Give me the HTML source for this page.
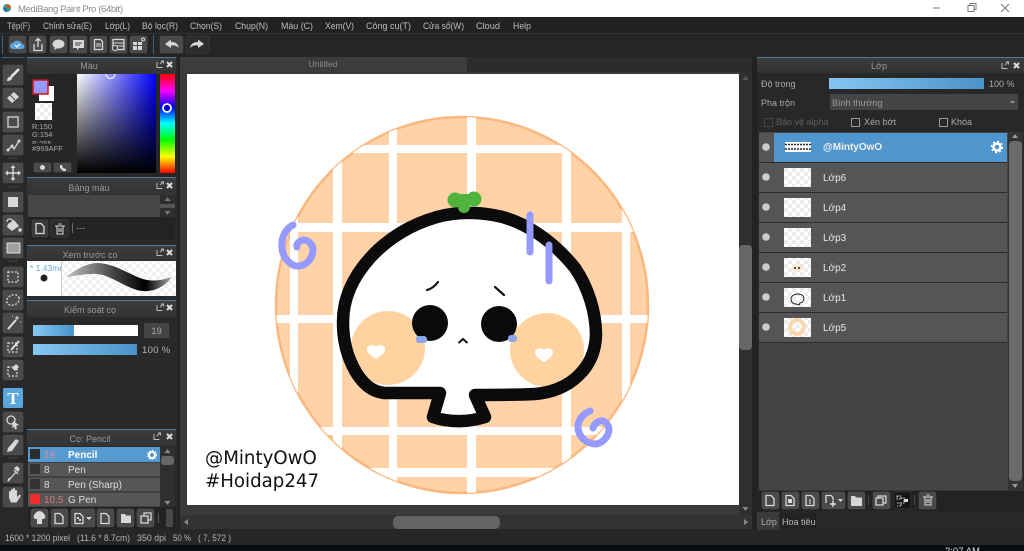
<!DOCTYPE html>
<html><head><meta charset="utf-8"><title>MediBang Paint Pro</title>
<style>
html,body{margin:0;padding:0;background:#1f1f1f;width:1024px;height:551px;overflow:hidden}
svg{display:block}
text{font-family:"Liberation Sans",sans-serif;font-size:9.5px;fill:#c4c4c4}
.m{fill:#bdbdbd;font-size:9.5px}
.d{fill:#9a9a9a}
.w{fill:#e6e6e6}
.b{fill:#3a3a3a;stroke:#4a4a4a;stroke-width:.5}
.t{fill:#4a4a4a;stroke:#555;stroke-width:.5}
.i{fill:none;stroke:#d8d8d8;stroke-width:1.3}
.f{fill:#d8d8d8}
.h{fill:url(#hd)}
.c{text-anchor:middle}
</style></head><body>
<svg width="1024" height="551" viewBox="0 0 1024 551" xmlns="http://www.w3.org/2000/svg">
<defs>
<pattern id="ck" width="8" height="8" patternUnits="userSpaceOnUse"><rect width="8" height="8" fill="#fff"/><rect width="4" height="4" fill="#ececec"/><rect x="4" y="4" width="4" height="4" fill="#ececec"/></pattern>
<pattern id="cl" width="8" height="8" patternUnits="userSpaceOnUse"><rect width="8" height="8" fill="#fff"/><rect width="4" height="4" fill="#f1f1f1"/><rect x="4" y="4" width="4" height="4" fill="#f1f1f1"/></pattern>
<linearGradient id="hd" x1="0" y1="0" x2="0" y2="1"><stop offset="0" stop-color="#3c3c3c"/><stop offset="1" stop-color="#333"/></linearGradient>
<linearGradient id="bl" x1="0" y1="0" x2="1" y2="0"><stop offset="0" stop-color="#86c6f4"/><stop offset="1" stop-color="#4a93c8"/></linearGradient>
<linearGradient id="sw" x1="0" y1="0" x2="1" y2="0"><stop offset="0" stop-color="#fff"/><stop offset="1" stop-color="#0000ff"/></linearGradient>
<linearGradient id="sk" x1="0" y1="0" x2="0" y2="1"><stop offset="0" stop-color="#000" stop-opacity="0"/><stop offset="1" stop-color="#000"/></linearGradient>
<linearGradient id="hue" x1="0" y1="0" x2="0" y2="1"><stop offset="0" stop-color="#f00"/><stop offset=".167" stop-color="#f0f"/><stop offset=".333" stop-color="#00f"/><stop offset=".5" stop-color="#0ff"/><stop offset=".667" stop-color="#0f0"/><stop offset=".833" stop-color="#ff0"/><stop offset="1" stop-color="#f00"/></linearGradient>
<linearGradient id="br" x1="0" y1="0" x2="1" y2="0"><stop offset="0" stop-color="#c4c4c4"/><stop offset=".45" stop-color="#444"/><stop offset=".75" stop-color="#000"/><stop offset="1" stop-color="#aaa"/></linearGradient>
<clipPath id="cc"><ellipse cx="462" cy="305" rx="186" ry="188"/></clipPath>
<clipPath id="rgb"><rect x="30" y="120" width="46" height="23.5"/></clipPath>
</defs>

<!-- title bar -->
<rect width="1024" height="17" fill="#fff"/>
<circle cx="7" cy="8" r="4" fill="#3a9a7a"/><path d="M7 4a4 4 0 0 1 4 4H7z" fill="#d9503f"/><path d="M3 8a4 4 0 0 0 4 4V8z" fill="#2c6fb5"/>
<text x="18" y="12" textLength="105" style="font-size:9.5px;fill:#8b8b8b">MediBang Paint Pro (64bit)</text>
<path d="M933 8h7" stroke="#777" fill="none"/><path d="M968 5.500h6v6h-6zM970 5.500v-2h6v6h-2" stroke="#777" fill="none"/><path d="M1001 4l8 8M1009 4l-8 8" stroke="#777" fill="none"/>

<!-- menu -->
<rect y="17" width="1024" height="16" fill="#222"/>
<rect y="33" width="1024" height="1" fill="#333"/>
<rect y="34" width="1024" height="23" fill="#252525"/>
<text class="m" x="7" y="29" textLength="23" lengthAdjust="spacingAndGlyphs">Tệp(F)</text><text class="m" x="43" y="29" textLength="49" lengthAdjust="spacingAndGlyphs">Chỉnh sửa(E)</text><text class="m" x="105" y="29" textLength="25" lengthAdjust="spacingAndGlyphs">Lớp(L)</text><text class="m" x="142" y="29" textLength="36" lengthAdjust="spacingAndGlyphs">Bộ lọc(R)</text><text class="m" x="190" y="29" textLength="32" lengthAdjust="spacingAndGlyphs">Chọn(S)</text><text class="m" x="235" y="29" textLength="33" lengthAdjust="spacingAndGlyphs">Chụp(N)</text><text class="m" x="281" y="29" textLength="32" lengthAdjust="spacingAndGlyphs">Màu (C)</text><text class="m" x="325" y="29" textLength="29" lengthAdjust="spacingAndGlyphs">Xem(V)</text><text class="m" x="366" y="29" textLength="45" lengthAdjust="spacingAndGlyphs">Công cụ(T)</text><text class="m" x="423" y="29" textLength="41" lengthAdjust="spacingAndGlyphs">Cửa sổ(W)</text><text class="m" x="476" y="29" textLength="24" lengthAdjust="spacingAndGlyphs">Cloud</text><text class="m" x="513" y="29" textLength="18" lengthAdjust="spacingAndGlyphs">Help</text>

<!-- toolbar -->
<rect x="2" y="35" width="1" height="19" fill="#3d5f78"/><rect x="153" y="35" width="1" height="19" fill="#3d5f78"/>
<rect class="t" x="9" y="36" width="17" height="17" rx="2"/><rect class="t" x="29" y="36" width="17" height="17" rx="2"/><rect class="t" x="50" y="36" width="17" height="17" rx="2"/><rect class="t" x="70" y="36" width="17" height="17" rx="2"/><rect class="t" x="90" y="36" width="17" height="17" rx="2"/><rect class="t" x="110" y="36" width="17" height="17" rx="2"/><rect class="t" x="130" y="36" width="17" height="17" rx="2"/><rect class="t" x="160" y="36" width="23" height="17" rx="2"/><rect fill="#2c2c2c" stroke="#444" stroke-width=".5" x="186" y="36" width="23" height="17" rx="2"/>
<path d="M13 49a3 3 0 0 1 0-6 5 5 0 0 1 9 1 2.500 2.500 0 0 1 0 5z" fill="#5ea6dd"/><path d="M15 45l2 2 3-3" stroke="#fff" fill="none" stroke-width="1.2"/>
<path class="i" d="M34 44v6.500h8V44M38 47v-8M35.500 41l2.500-2.500 2.500 2.500"/>
<ellipse class="f" cx="58.500" cy="44" rx="6" ry="4.500"/><path class="f" d="M55 47l-1 3 4-2z"/>
<path class="f" d="M73 40h11v8h-5l-2 2.500V48h-4z"/><path d="M75 43h7M75 45h5" stroke="#444"/>
<path class="i" d="M94.500 39.500h6l2 2v8h-8z"/><path d="M96 44h5M96 46h5" stroke="#d8d8d8"/>
<path class="i" d="M113 39.500h11v10h-11z"/><path d="M113 43h11M113 46h11" stroke="#d8d8d8"/><circle cx="115" cy="48" r="2.500" fill="#444" stroke="#d8d8d8"/>
<path class="f" d="M133 42h4v3h-4zM138 42h4v3h-4zM133 46h4v4h-4zM138 46h4v4h-4z"/><circle cx="143" cy="39.500" r="1.500" fill="none" stroke="#d8d8d8"/>
<path class="f" d="M165 44l6-4.500v2.500c5 0 7 2 8 6-2-2-4-3-8-2.500V48z"/>
<path class="f" d="M204 44l-6-4.500v2.500c-5 0-7 2-8 6 2-2 4-3 8-2.500V48z"/>

<!-- left column -->
<rect x="0" y="57" width="27" height="473" fill="#282828"/>
<rect x="2" y="57" width="23" height="1" fill="#3d5f78"/>
<rect x="27" y="57" width="151" height="473" fill="#2a2929"/>
<rect x="178" y="57" width="2" height="473" fill="#222"/>

<!-- tool buttons -->
<rect class="t" x="3" y="65" width="20" height="20" rx="1.500"/><rect class="t" x="3" y="88" width="20" height="20" rx="1.500"/><rect class="t" x="3" y="112" width="20" height="20" rx="1.500"/><rect class="t" x="3" y="135" width="20" height="20" rx="1.500"/><rect class="t" x="3" y="163" width="20" height="20" rx="1.500"/><rect class="t" x="3" y="192" width="20" height="20" rx="1.500"/><rect class="t" x="3" y="215" width="20" height="20" rx="1.500"/><rect class="t" x="3" y="238" width="20" height="20" rx="1.500"/><rect class="t" x="3" y="267" width="20" height="20" rx="1.500"/><rect class="t" x="3" y="290" width="20" height="20" rx="1.500"/><rect class="t" x="3" y="313" width="20" height="20" rx="1.500"/><rect class="t" x="3" y="337" width="20" height="20" rx="1.500"/><rect class="t" x="3" y="360" width="20" height="20" rx="1.500"/><rect fill="#5aa5dc" x="3" y="388" width="20" height="20" rx="1.500"/><rect class="t" x="3" y="412" width="20" height="20" rx="1.500"/><rect class="t" x="3" y="435" width="20" height="20" rx="1.500"/><rect class="t" x="3" y="463" width="20" height="20" rx="1.500"/><rect class="t" x="3" y="487" width="20" height="20" rx="1.500"/>
<path d="M8 158h10M8 187h10M8 261h10M8 458h10" stroke="#444"/>
<path d="M19 69l-8 8" stroke="#e8e8e8" stroke-width="2.500"/><path class="f" d="M7 81c0-3 2-5 4-4 2 1 1 4-4 4z"/>
<path class="f" d="M7 98l7-6 5 5-7 6z"/><path d="M10 95l5 5" stroke="#444"/>
<rect class="i" x="8" y="117" width="10" height="10"/>
<path class="i" d="M8 150l4-4 2 3 5-8" stroke-width="1.600"/><circle class="f" cx="8" cy="150" r="1.500"/><circle class="f" cx="12" cy="146" r="1.500"/><circle class="f" cx="19" cy="141" r="1.500"/>
<path class="f" d="M13 165l2.500 3h-5zM13 181l2.500-3h-5zM5 173l3-2.500v5zM21 173l-3-2.500v5z"/><path d="M13 167v12M7 173h12" stroke="#d8d8d8" stroke-width="1.400"/>
<rect class="f" x="8" y="197" width="10" height="10"/>
<path class="f" d="M8 224l6-4 5 6-7 5-5-4z"/><path class="i" d="M7 222c0-4 5-4 6 0"/><circle class="f" cx="20" cy="230" r="1.700"/>
<rect x="7" y="243" width="13" height="10" style="fill:#a0a0a0" stroke="#ddd"/>
<rect x="8" y="272" width="10" height="10" class="i" stroke-dasharray="2 1.500"/>
<ellipse cx="13" cy="300" rx="6.500" ry="5" class="i" stroke-dasharray="2 1.500" transform="rotate(-25 13 300)"/>
<path d="M8 329l8-9" stroke="#e0e0e0" stroke-width="2"/><path d="M17 316v4M15 318h4M12 316h1M20 322h1" stroke="#e0e0e0"/>
<rect class="i" x="8" y="343" width="9" height="9" stroke-dasharray="2 1.500"/><path d="M11 350l8-9" stroke="#e0e0e0" stroke-width="2"/>
<rect class="i" x="8" y="367" width="9" height="9" stroke-dasharray="2 1.500"/><path class="f" d="M12 368l4-4 3 3-4 4z"/>
<text x="13" y="404" class="c" style="font-family:'Liberation Serif',serif;font-size:17px;font-weight:bold;fill:#fff">T</text>
<circle class="i" cx="11" cy="420" r="4"/><path class="f" d="M13 421l6 4-3 1 1 3-2 .5-1-3-2 2z"/>
<path class="f" d="M8 448l8-9 3 2-7 10-5 1z"/>
<path class="i" d="M9 480l7-8M14 470l4 4"/><path class="f" d="M14 468l3-2 3 3-2 3z"/><path d="M8 481l2-3" stroke="#d8d8d8" stroke-width="2"/>
<path class="f" d="M9 498v-6a1 1 0 0 1 2 0v-2a1 1 0 0 1 2 0v-1a1 1 0 0 1 2 0v2a1 1 0 0 1 2 0v6l2-2a1 1 0 0 1 1.500 1.500l-4 6H11z"/>

<!-- Colour panel -->
<rect x="27" y="57" width="149" height="1" fill="#4d7d9d"/>
<rect class="h" x="27" y="58" width="149" height="16"/>
<text class="c d" x="89" y="69" style="font-size:9px">Màu</text>
<path stroke-width="1" d="M157 62v5.500h5.500M160 64l3-3M161 61h2.500v2.500" style="stroke:#bbb;fill:none"/><path d="M167 62l5 5M172 62l-5 5" stroke="#ddd" stroke-width="2"/>
<rect x="27" y="74" width="150" height="103" fill="#272626"/>
<rect x="39" y="86" width="15" height="15" fill="#fff"/>
<rect x="33" y="80" width="15" height="14" fill="#969aff" stroke="#d0141c" stroke-width="1.500"/>
<rect x="35" y="103" width="17" height="17" fill="url(#ck)"/>
<g clip-path="url(#rgb)"><text x="32" y="129" style="font-size:7.500px;fill:#aaa">R:150</text><text x="32" y="137" style="font-size:7.500px;fill:#aaa">G:154</text><text x="32" y="146" style="font-size:7.500px;fill:#aaa">B:255</text></g>
<text x="32" y="151" style="font-size:7.500px;fill:#aaa">#969AFF</text>
<rect class="t" x="34" y="163" width="17" height="9" rx="1"/><rect class="t" x="54" y="163" width="17" height="9" rx="1"/>
<circle class="f" cx="42.500" cy="167.500" r="2.500"/><path class="f" d="M60 165l2 0 1 3 3 1 0 2-3 0-3-3z"/>
<rect x="77" y="74" width="79" height="99" fill="url(#sw)"/><rect x="77" y="74" width="79" height="99" fill="url(#sk)"/>
<path d="M106 74a4.500 4.500 0 0 0 9 0" fill="none" stroke="#dfe0ff" stroke-width="1.500"/>
<rect x="160" y="74" width="15" height="99" fill="url(#hue)"/>
<circle cx="167" cy="108" r="4" fill="#0000d8" stroke="#fff" stroke-width="1.800"/>

<!-- Palette panel -->
<rect x="27" y="177" width="149" height="1" fill="#4d7d9d"/>
<rect class="h" x="27" y="178" width="149" height="17"/>
<text class="c d" x="89" y="191" style="font-size:9px">Bảng màu</text>
<path style="stroke:#bbb;fill:none" d="M157 183v5.500h5.500M160 185l3-3M161 182h2.500v2.500"/><path d="M167 183l5 5M172 183l-5 5" stroke="#ddd" stroke-width="2"/>
<rect x="28" y="195" width="132" height="22" fill="#474645"/>
<rect x="160" y="195" width="15" height="22" fill="#2e2e2e"/>
<rect x="160" y="204" width="15" height="4" fill="#555"/>
<path d="M167.500 197l3 4h-6zM167.500 215l3-4h-6z" fill="#777"/>
<rect x="29" y="217" width="146" height="23" fill="#232323"/>
<rect class="b" x="32" y="220" width="16" height="17" rx="1.500"/><rect fill="#2b2b2b" stroke="#555" stroke-width=".5" x="51" y="220" width="17" height="17" rx="1.500"/>
<path class="i" d="M36 223.500h5l3 3v7h-8z" stroke-width="1"/>
<path d="M55 226h10M57 226v8h6v-8M58.500 224h3M59 228v4M61 228v4" stroke="#ddd" fill="none"/>
<rect x="72" y="223" width="1" height="10" fill="#666"/><text x="76" y="231" class="d" style="font-size:9px">---</text>

<!-- preview -->
<rect x="27" y="245" width="149" height="1" fill="#4d7d9d"/>
<rect class="h" x="27" y="246" width="149" height="15"/>
<text class="c d" x="90" y="258" style="font-size:9px">Xem trước cọ</text>
<path style="stroke:#bbb;fill:none" d="M157 250v5.500h5.500M160 252l3-3M161 249h2.500v2.500"/><path d="M167 250l5 5M172 250l-5 5" stroke="#ddd" stroke-width="2"/>
<rect x="27" y="261" width="34" height="35" fill="#fff"/><rect x="61" y="261" width="1" height="35" fill="#ccc"/>
<rect x="62" y="261" width="114" height="35" fill="url(#cl)"/>
<text x="30" y="271" style="font-size:8.500px;fill:#6aa8d8">* 1.43mr</text>
<circle cx="44" cy="278" r="3.500" fill="#222"/>
<path d="M66 277C75 270 87 263 97 263 112 263 125 272 140 278 150 282 160 281 172 277 165 286 155 292 143 291 130 290 118 280 103 275 90 272 78 276 66 277Z" fill="url(#br)"/>

<!-- brush control -->
<rect x="27" y="300" width="149" height="1" fill="#4d7d9d"/>
<rect class="h" x="27" y="301" width="149" height="16"/>
<text class="c d" x="90" y="313" style="font-size:9px">Kiểm soát cọ</text>
<path style="stroke:#bbb;fill:none" d="M157 305v5.500h5.500M160 307l3-3M161 304h2.500v2.500"/><path d="M167 305l5 5M172 305l-5 5" stroke="#ddd" stroke-width="2"/>
<rect x="33" y="325" width="105" height="11" fill="#fff"/><rect x="33" y="325" width="41" height="11" fill="url(#bl)"/>
<rect x="144" y="323" width="25" height="15" fill="#454545"/><text x="156.500" y="334" class="c" style="font-size:9.500px;fill:#aaa">19</text>
<rect x="33" y="344" width="104" height="11" fill="url(#bl)"/>
<text x="142" y="353" style="font-size:9.500px;fill:#b5b5b5;letter-spacing:.3px">100 %</text>

<!-- brush list -->
<rect x="27" y="429" width="149" height="1" fill="#4d7d9d"/>
<rect class="h" x="27" y="430" width="149" height="16"/>
<text class="c d" x="90" y="442" style="font-size:9px">Cọ: Pencil</text>
<path style="stroke:#bbb;fill:none" d="M154 434v5.500h5.500M157 436l3-3M158 433h2.500v2.500"/><path d="M167 434l5 5M172 434l-5 5" stroke="#ddd" stroke-width="2"/>
<rect x="28" y="447" width="132" height="15" fill="#559ad0"/>
<rect x="28" y="462.500" width="132" height="14" fill="#565656"/><rect x="28" y="477.500" width="132" height="14" fill="#565656"/><rect x="28" y="492.500" width="132" height="14" fill="#565656"/>
<rect x="30" y="449" width="10" height="10" fill="#2c2c2c"/><rect x="30" y="464" width="10" height="10" fill="#333"/><rect x="30" y="479" width="10" height="10" fill="#333"/><rect x="30" y="494" width="10" height="10" fill="#ee2c2c"/>
<text x="44" y="458" style="font-size:10px;fill:#e88a9a">19</text><text x="44" y="473" style="font-size:10px;fill:#ddd">8</text><text x="44" y="488" style="font-size:10px;fill:#ddd">8</text><text x="44" y="503" style="font-size:10px;fill:#d87a7a">10.5</text>
<text x="68" y="458" style="font-size:10px;font-weight:bold;fill:#fff">Pencil</text><text x="68" y="473" style="font-size:10px;fill:#ddd">Pen</text><text x="68" y="488" style="font-size:10px;fill:#ddd">Pen (Sharp)</text><text x="68" y="503" style="font-size:10px;fill:#ddd">G Pen</text>
<circle cx="152" cy="455" r="3" fill="none" stroke="#fff" stroke-width="2"/><circle cx="152" cy="455" r="4.500" fill="none" stroke="#fff" stroke-width="1" stroke-dasharray="1.500 1.500"/>
<rect x="160" y="447" width="15" height="60" fill="#2f2f2f"/><rect x="161" y="456" width="13" height="9" rx="3" fill="#666"/>
<path d="M167.500 449l3 4h-6zM167.500 505l3-4h-6z" fill="#888"/>
<rect x="28" y="507" width="148" height="22" fill="#232323"/>
<rect class="t" x="31" y="509" width="17" height="18" rx="2"/><rect class="t" x="51" y="509" width="17" height="18" rx="2"/><rect class="t" x="71" y="509" width="24" height="18" rx="2"/><rect class="t" x="97" y="509" width="17" height="18" rx="2"/><rect class="t" x="117" y="509" width="17" height="18" rx="2"/><rect class="t" x="137" y="509" width="17" height="18" rx="2"/><rect x="158" y="513" width="1" height="10" fill="#555"/><rect x="166" y="509" width="7" height="18" rx="1.500" fill="#484848"/>
<path class="f" d="M35 519a3 3 0 0 1 0-5 5 5 0 0 1 9 0 3 3 0 0 1 0 5h-2v5h-5v-5z"/>
<path class="i" d="M55 513.500h5l3 3v7h-8z" stroke-width="1"/>
<path class="i" d="M75 513.500h5l3 3v7h-8z" stroke-width="1"/><path class="f" d="M77 517h2v2h-2zM79 519h2v2h-2z"/><path class="f" d="M86 517h6l-3 3z"/>
<path class="i" d="M101 513.500h5l3 3v7h-8z" stroke-width="1"/>
<path class="f" d="M121 514h4l1 1.500h5V523h-10z"/>
<path class="i" d="M141 516h7v7h-7zM144 516v-3h7v7h-3" stroke-width="1"/>

<!-- canvas zone -->
<rect x="180" y="57" width="577" height="473" fill="#272727"/>
<rect x="180" y="57" width="287" height="15" fill="#3c3c3c"/>
<rect x="467" y="57" width="285" height="15" fill="#2c2c2c"/>
<text x="323" y="67" class="c" style="font-size:8.500px;fill:#8e8e8e">Untitled</text>
<rect x="180" y="72" width="559" height="443" fill="#3a3a3a"/>
<rect x="187" y="74" width="552" height="431" fill="#fff"/>
<rect x="739" y="72" width="13" height="443" fill="#2f2f2f"/>
<rect x="739" y="245" width="13" height="105" rx="4" fill="#666"/>
<path d="M745.500 511l3-4h-6z" fill="#888"/><path d="M745.500 76l3 4h-6z" fill="#555"/>
<rect x="180" y="515" width="572" height="14" fill="#333"/>
<rect x="393" y="516" width="107" height="13" rx="5" fill="#646464"/>
<path d="M184 522l4-3v6zM748 522l-4-3v6z" fill="#888"/>
<rect x="752" y="57" width="5" height="473" fill="#222"/>

<!-- drawing -->
<ellipse cx="462" cy="305" rx="186" ry="188" fill="#ffd2a8" stroke="#fbb87e" stroke-width="2.500"/>
<g clip-path="url(#cc)" fill="#fff">
<rect x="290" y="116" width="8" height="380"/><rect x="333" y="116" width="9" height="380"/><rect x="389" y="116" width="8" height="380"/><rect x="467" y="116" width="9" height="380"/><rect x="562" y="116" width="9" height="380"/><rect x="622" y="116" width="8" height="380"/>
<rect x="270" y="145" width="390" height="8"/><rect x="270" y="223" width="390" height="9"/><rect x="270" y="315" width="390" height="8"/><rect x="270" y="427" width="390" height="8"/><rect x="270" y="468" width="390" height="9"/>
</g>
<path d="M343 322C343 300 352 278 370 258 388 238 412 224 437 217 455 212 475 212 493 215 525 220 555 243 575 268 588 287 596 312 596 335 595 368 570 391 535 394 515 395 495 395 475 395L485 417C470 422 450 423 433 417L440 393 385 393C370 392 358 380 350 360 345 348 343 335 343 322Z" fill="#fff"/>
<circle cx="388" cy="348" r="37" fill="#ffd3a0"/><circle cx="547" cy="350" r="37" fill="#ffd3a0"/>
<path d="M343 322C343 300 352 278 370 258 388 238 412 224 437 217 455 212 475 212 493 215 525 220 555 243 575 268 588 287 596 312 596 335 595 368 570 391 535 394 515 395 495 395 475 395L485 417C470 422 450 423 433 417L440 393 385 393C370 392 358 380 350 360 345 348 343 335 343 322Z" fill="none" stroke="#0b0b0b" stroke-width="12.500" stroke-linejoin="round" stroke-linecap="round"/>
<g fill="#4fb33e"><circle cx="455" cy="200" r="7.500"/><circle cx="474" cy="199" r="7.500"/><circle cx="464" cy="207" r="6"/><rect x="455" y="194" width="18" height="9"/></g>
<path d="M530 215v37M549 245v36" stroke="#969aff" stroke-width="7" stroke-linecap="round"/>
<circle cx="430" cy="323" r="18" fill="#0a0a0a"/><circle cx="499" cy="324" r="18" fill="#0a0a0a"/>
<rect x="416" y="336" width="11" height="7" rx="3" fill="#8ea6ec"/><rect x="508" y="335" width="9" height="7" rx="3" fill="#8ea6ec"/>
<path d="M427 290c4-1 8-4 11-8" fill="none" stroke="#111" stroke-width="2.200" stroke-linecap="round"/>
<path d="M495 287l9 8" fill="none" stroke="#111" stroke-width="2.200" stroke-linecap="round"/>
<path d="M458.500 343l4.500-4 4.500 4" fill="none" stroke="#111" stroke-width="2"/>
<path d="M376 359c-5-3-9-6-9-10 0-4 6-5 9-2 3-3 9-2 9 2 0 4-4 7-9 10z" fill="#fff"/>
<path d="M544 362c-5-3-9-6-9-10 0-4 6-5 9-2 3-3 9-2 9 2 0 4-4 7-9 10z" fill="#fff"/>
<path d="M293 225C285 229 281 238 282 248 283 260 293 267 299 266 308 265 313 257 313 249 312 243 307 240 303 240 299 241 296 244 297 247" fill="none" stroke="#969aff" stroke-width="7" stroke-linecap="round"/>
<path d="M590 411C582 414 578 421 578 427 578 437 587 444 596 444 603 443 609 436 609 429 608 423 604 420 600 421 596 422 594 425 593 428" fill="none" stroke="#969aff" stroke-width="7" stroke-linecap="round"/>
<text x="205" y="464" style="font-family:'DejaVu Sans',sans-serif;font-size:18.2px;fill:#111">@MintyOwO</text>
<text x="205" y="487" style="font-family:'DejaVu Sans',sans-serif;font-size:18.2px;fill:#111">#Hoidap247</text>

<!-- right panel -->
<rect x="757" y="57" width="267" height="1" fill="#4d7d9d"/>
<rect class="h" x="757" y="58" width="267" height="15"/>
<text class="c d" x="879" y="69" style="font-size:9px">Lớp</text>
<path style="stroke:#bbb;fill:none" d="M1002 63v5.500h5.500M1005 65l3-3M1006 62h2.500v2.500"/><path d="M1014 63l5 5M1019 63l-5 5" stroke="#ddd" stroke-width="2"/>
<rect x="757" y="73" width="267" height="457" fill="#282828"/>
<text x="761" y="87" style="font-size:9px;fill:#aaa">Độ trong</text>
<rect x="829" y="78" width="155" height="11" fill="url(#bl)"/>
<text x="989" y="87" style="font-size:9px;fill:#aaa">100 %</text>
<text x="761" y="106" style="font-size:9px;fill:#aaa">Pha trộn</text>
<rect x="830" y="94" width="188" height="16" rx="1" fill="#454545"/>
<text x="832" y="106" style="font-size:9px;fill:#999">Bình thường</text><path d="M1010 101h5l-2.500 2.500z" fill="#999"/>
<rect x="764.500" y="118.500" width="8" height="8" fill="none" stroke="#444"/><text x="776" y="125" style="font-size:9px;fill:#5e5e5e">Bảo vệ alpha</text>
<rect x="851.500" y="118.500" width="8" height="8" fill="none" stroke="#999"/><text x="864" y="125" style="font-size:9px;fill:#aaa">Xén bớt</text>
<rect x="939.500" y="118.500" width="8" height="8" fill="none" stroke="#999"/><text x="951" y="125" style="font-size:9px;fill:#aaa">Khóa</text>
<rect x="759" y="132" width="249" height="358" fill="#474544"/>
<rect x="759" y="133" width="248" height="29" fill="#555"/><rect x="774" y="133" width="233" height="29" fill="#4f96cf"/>
<rect x="759" y="163" width="248" height="29" fill="#555"/><rect x="759" y="193" width="248" height="29" fill="#555"/><rect x="759" y="223" width="248" height="29" fill="#555"/><rect x="759" y="253" width="248" height="29" fill="#555"/><rect x="759" y="283" width="248" height="29" fill="#555"/><rect x="759" y="313" width="248" height="29" fill="#555"/>
<rect x="759" y="162" width="248" height="1" fill="#2c2c2c"/><rect x="759" y="192" width="248" height="1" fill="#2c2c2c"/><rect x="759" y="222" width="248" height="1" fill="#2c2c2c"/><rect x="759" y="252" width="248" height="1" fill="#2c2c2c"/><rect x="759" y="282" width="248" height="1" fill="#2c2c2c"/><rect x="759" y="312" width="248" height="1" fill="#2c2c2c"/><rect x="759" y="342" width="248" height="1" fill="#2c2c2c"/>
<circle cx="766" cy="147" r="3.800" fill="#ccc"/><circle cx="766" cy="177" r="3.800" fill="#ccc"/><circle cx="766" cy="207" r="3.800" fill="#ccc"/><circle cx="766" cy="237" r="3.800" fill="#ccc"/><circle cx="766" cy="267" r="3.800" fill="#ccc"/><circle cx="766" cy="297" r="3.800" fill="#ccc"/><circle cx="766" cy="327" r="3.800" fill="#ccc"/>
<rect x="785" y="142" width="26" height="10" fill="#fff"/><path d="M785 144.500h26M785 149h26" stroke="#222" stroke-width="1.600" stroke-dasharray="2 1"/>
<rect x="784" y="168" width="27" height="19" fill="url(#ck)"/><rect x="784" y="198" width="27" height="19" fill="url(#ck)"/><rect x="784" y="228" width="27" height="19" fill="url(#ck)"/><rect x="784" y="258" width="27" height="19" fill="url(#ck)"/><rect x="784" y="288" width="27" height="19" fill="url(#ck)"/><rect x="784" y="318" width="27" height="19" fill="url(#ck)"/>
<ellipse cx="797" cy="268" rx="6" ry="3" fill="#fbe3c8"/><circle cx="795" cy="268" r="1" fill="#222"/><circle cx="799" cy="268" r="1" fill="#222"/>
<path d="M791 299c0-6 12-7 13-1 0 3-2 5-4 5l-1 2-3-1c-3 0-5-2-5-5z" fill="none" stroke="#222"/>
<circle cx="797" cy="327" r="7" fill="none" stroke="#fcd7ae" stroke-width="4"/>
<text x="823" y="150" style="font-size:10px;font-weight:bold;fill:#f0f0f0">@MintyOwO</text>
<text x="823" y="181" class="w" style="font-size:10px">Lớp6</text><text x="823" y="211" class="w" style="font-size:10px">Lớp4</text><text x="823" y="241" class="w" style="font-size:10px">Lớp3</text><text x="823" y="271" class="w" style="font-size:10px">Lớp2</text><text x="823" y="301" class="w" style="font-size:10px">Lớp1</text><text x="823" y="331" class="w" style="font-size:10px">Lớp5</text>
<circle cx="997" cy="147" r="3.500" fill="none" stroke="#fff" stroke-width="2.500"/><circle cx="997" cy="147" r="5.500" fill="none" stroke="#fff" stroke-width="1.500" stroke-dasharray="2 2.300"/>
<rect x="1008" y="132" width="15" height="358" fill="#333"/><rect x="1009" y="141" width="13" height="340" rx="4" fill="#6b6b6b"/>
<path d="M1015 134l3 4h-6zM1015 488l3-4h-6z" fill="#999"/>
<rect x="759" y="490" width="265" height="1" fill="#333"/>
<rect x="757" y="491" width="267" height="20" fill="#232323"/>
<rect class="t" x="762" y="492" width="17" height="17" rx="2"/><rect class="t" x="782" y="492" width="17" height="17" rx="2"/><rect class="t" x="802" y="492" width="17" height="17" rx="2"/><rect class="t" x="822" y="492" width="23" height="17" rx="2"/><rect class="t" x="848" y="492" width="17" height="17" rx="2"/><rect class="t" x="873" y="492" width="17" height="17" rx="2"/><rect fill="#161616" stroke="#444" stroke-width=".5" x="894" y="492" width="17" height="17" rx="2"/><rect class="t" x="919" y="492" width="17" height="17" rx="2"/>
<path d="M868.500 495v10M914.500 495v10" stroke="#444"/>
<path class="i" stroke-width="1" d="M766 495.500h5l3 3v7h-8z"/><path class="i" stroke-width="1" d="M786 495.500h5l3 3v7h-8z"/><rect class="f" x="788" y="499" width="4" height="4"/><path class="i" stroke-width="1" d="M806 495.500h5l3 3v7h-8z"/><path d="M810 499v5" stroke="#ddd"/>
<path class="i" stroke-width="1" d="M826 503v-7.500h5l2 2v3"/><path d="M833 501v6M830 504h6" stroke="#ddd" stroke-width="1.500"/><path class="f" d="M838 499h5l-2.500 3z"/>
<path class="f" d="M851 496h4l1 1.500h6V506h-11z"/>
<path class="i" stroke-width="1" d="M876 498h7v7h-7zM878 498v-2h8v7h-3"/>
<path d="M897 496h4v3h-4zM897 503h4v3h-4M901 498h3v5h-3" stroke="#ddd" fill="none" stroke-dasharray="1.500 1"/><rect class="f" x="904" y="499" width="4" height="3"/>
<path d="M923 497h10M925 497v8h6v-8M926.500 495h3M927 499v4M929 499v4" stroke="#ddd" fill="none"/>
<rect x="757" y="512" width="22" height="18" rx="1" fill="#3a3a3a"/>
<text x="761" y="525" style="font-size:9px;fill:#aaa">Lớp</text>
<rect x="780" y="513" width="36" height="15" fill="#222"/>
<text x="782" y="525" style="font-size:9px;fill:#bbb">Hoa tiêu</text>

<!-- status -->
<rect y="530" width="1024" height="15" fill="#272727"/>
<rect y="545" width="1024" height="6" fill="#0a0e14"/>
<text x="5" y="541" textLength="65" lengthAdjust="spacingAndGlyphs" style="font-size:9.500px;fill:#b5b5b5">1600 * 1200 pixel</text>
<text x="77" y="541" textLength="53" lengthAdjust="spacingAndGlyphs" style="font-size:9.500px;fill:#b5b5b5">(11.6 * 8.7cm)</text>
<text x="137" y="541" textLength="29" lengthAdjust="spacingAndGlyphs" style="font-size:9.500px;fill:#b5b5b5">350 dpi</text>
<text x="173" y="541" textLength="18" lengthAdjust="spacingAndGlyphs" style="font-size:9.500px;fill:#b5b5b5">50 %</text>
<text x="198" y="541" textLength="33" lengthAdjust="spacingAndGlyphs" style="font-size:9.500px;fill:#b5b5b5">( 7, 572 )</text>
<text x="945" y="554" style="font-size:9.500px;fill:#ddd">2:07 AM</text>
</svg>
</body></html>
